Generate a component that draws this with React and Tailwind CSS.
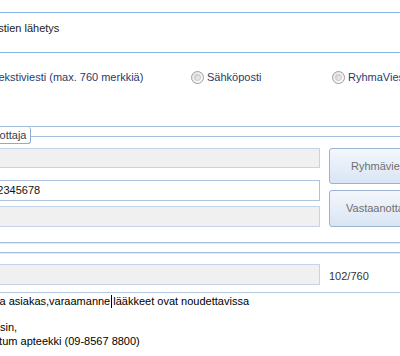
import React from 'react'

function Radio({ label, className }) {
  return (
    <div className={`flex shrink-0 items-center gap-[3px] whitespace-nowrap ${className}`}>
      <span className="flex h-[13px] w-[13px] shrink-0 items-center justify-center rounded-full border border-[#9a9fa6] bg-gradient-to-br from-[#e4e4e4] to-[#ffffff]">
        <span className="h-[7px] w-[7px] rounded-full border border-[#c4c4c4] bg-gradient-to-br from-[#d0d0d0] to-[#f2f2f2]" />
      </span>
      <span className="text-[#1f3b6e]">{label}</span>
    </div>
  )
}

function Line() {
  return (
    <div>
      <div className="h-px bg-[#a6bee0]" />
      <div className="h-px bg-[#e2eaf5]" />
    </div>
  )
}

function Field({ white, className, children }) {
  return (
    <div
      className={`flex items-center whitespace-nowrap border px-[4px] ${
        white ? 'border-[#aec3df] bg-white' : 'border-[#c3d3e9] bg-[#f0f0f0]'
      } ${className}`}
    >
      {children}
    </div>
  )
}

function Button({ label, className }) {
  return (
    <div
      className={`flex items-center whitespace-nowrap rounded-[3px] border border-[#9cb2d1] bg-gradient-to-b from-[#f4f7fc] to-[#d9e5f4] text-[#6f6f6f] ${className}`}
    >
      {label}
    </div>
  )
}

export default function App() {
  return (
    <div className="h-[356px] w-[400px] overflow-hidden bg-white font-['Liberation_Sans',Arial,sans-serif] text-[11px] leading-[13px]">
      <div className="h-[12px]" />
      <div className="h-px bg-[#86b5e6]" />
      <div className="-ml-[44px] h-[39px] whitespace-nowrap pt-[9px] text-[#222]">
        Tekstiviestien lähetys
      </div>
      <div className="h-px bg-[#86b5e6]" />

      <div className="flex h-[73px] items-start pt-[18px]">
        <Radio label="Tekstiviesti (max. 760 merkkiä)" className="-ml-[23px] w-[214px]" />
        <Radio label="Sähköposti" className="w-[141px]" />
        <Radio label="RyhmaViesti" className="w-[120px]" />
      </div>

      <div className="h-px bg-[#a6bee0]" />
      <div className="flex h-[17px]">
        <div className="-ml-[42px] flex w-[73px] shrink-0 items-center whitespace-nowrap rounded-br-[3px] rounded-tr-[3px] border-b border-r border-[#8eabd6] pl-[2px] text-[#2f3f55]">
          Vastaanottaja
        </div>
        <div className="mt-[9px] h-px flex-1 bg-[#a6bee0]" />
      </div>

      <div className="mt-[4px] flex">
        <div className="-ml-[10px] flex w-[330px] shrink-0 flex-col">
          <Field className="h-[20px]" />
          <Field white className="mt-[12px] h-[21px]">
            <span className="-ml-[16px] text-[#111]">0412345678</span>
          </Field>
          <Field className="mt-[5px] h-[21px]" />
        </div>
        <div className="ml-[9px] flex w-[110px] shrink-0 flex-col">
          <Button label="Ryhmäviestit" className="h-[36px] pl-[21px]" />
          <Button label="Vastaanottajat" className="mt-[6px] h-[37px] pl-[16px]" />
        </div>
      </div>

      <div className="h-[15px]" />
      <Line />
      <div className="h-[8px]" />
      <Line />
      <div className="mt-[10px] flex items-center">
        <Field className="-ml-[10px] h-[21px] w-[330px] shrink-0" />
        <span className="ml-[9px] mt-[4px] text-[#333]">102/760</span>
      </div>
      <div className="h-[7px]" />
      <div className="h-px bg-[#b4c8e4]" />
      <div className="whitespace-nowrap pt-[2px] text-[#000]">
        <div className="-ml-[31px] flex">
          <span>Arvoisa asiakas,varaamanne</span>
          <span className="mx-[1px] inline-block h-[13px] w-px bg-black" />
          <span>lääkkeet ovat noudettavissa</span>
        </div>
        <div className="h-[13px]" />
        <div className="-ml-[41px]">Ystävällisin,</div>
        <div className="-ml-[18px] pt-px">Testum apteekki (09-8567 8800)</div>
      </div>
    </div>
  )
}
